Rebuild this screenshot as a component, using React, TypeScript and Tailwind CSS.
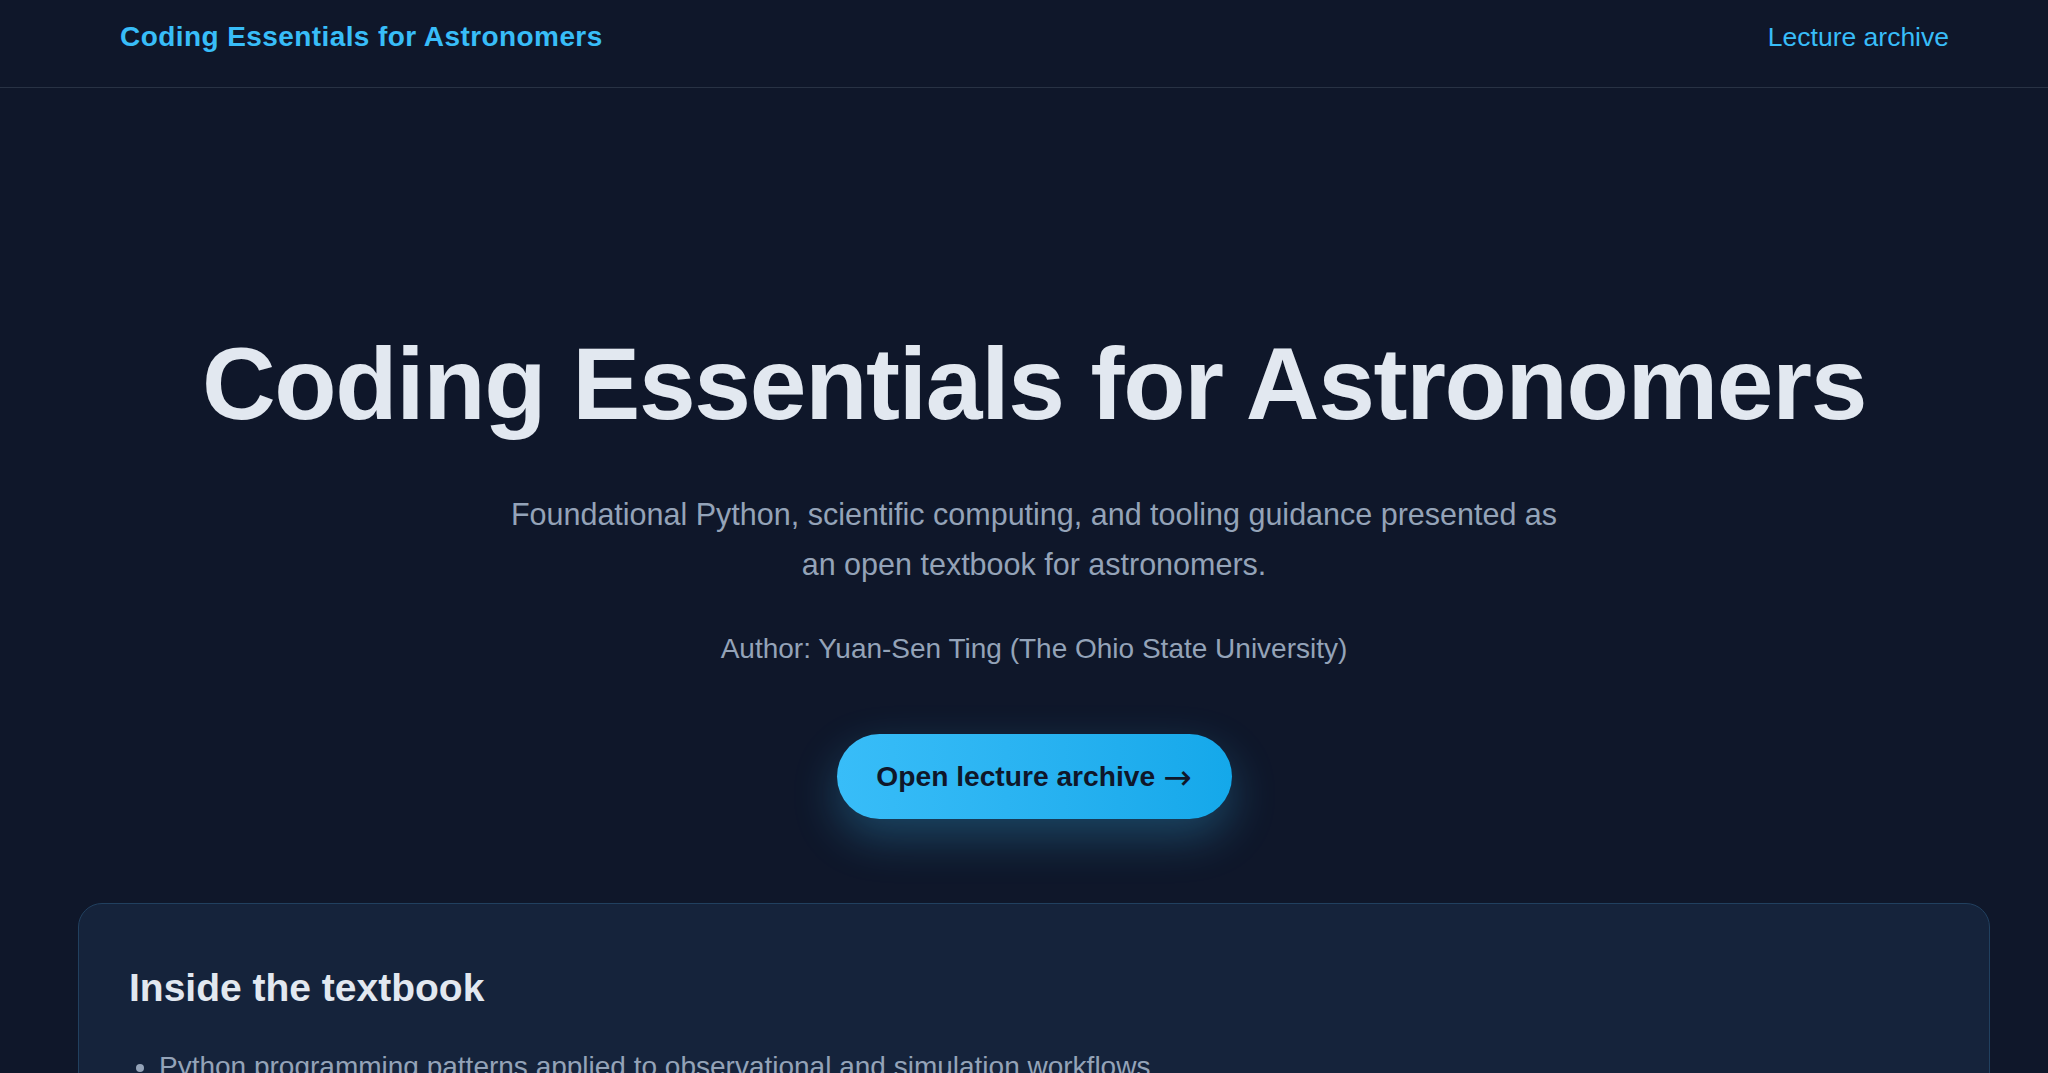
import React from "react";

export default function App() {
  return (
    <div className="min-h-screen bg-[#0f172a] font-['Liberation_Sans',Arial,sans-serif] text-[#e2e8f0]">
      <header className="h-[88px] border-b border-[#283244]">
        <div className="ml-[120px] mr-[99px] flex items-center justify-between pt-[16px]">
          <a className="text-[28px] font-bold leading-[42px] tracking-[0.015em] text-[#38bdf8]">
            Coding Essentials for Astronomers
          </a>
          <a className="text-[26.5px] leading-[42px] text-[#38bdf8]">Lecture archive</a>
        </div>
      </header>
      <main className="flex flex-col items-center pl-[20px]">
        <h1 className="mt-[240px] text-[102px] font-bold leading-[112px] tracking-[-0.013em] text-[#e2e8f0]">
          Coding Essentials for Astronomers
        </h1>
        <p className="mt-[49px] max-w-[1075px] text-center text-[30.5px] leading-[50px] text-[#94a3b8]">
          Foundational Python, scientific computing, and tooling guidance presented as an open textbook for astronomers.
        </p>
        <p className="mt-[35px] text-[28px] leading-[50px] text-[#94a3b8]">
          Author: Yuan-Sen Ting (The Ohio State University)
        </p>
        <a className="mt-[60px] flex h-[85px] w-[395px] items-center justify-center gap-[8px] rounded-full bg-gradient-to-r from-[#38bdf8] to-[#14a8ea] text-[28.2px] font-bold text-[#0f172a] shadow-[0_18px_45px_rgba(56,189,248,0.28)]">
          <span>Open lecture archive</span>
          <span className="font-['DejaVu_Sans',sans-serif] text-[34px] font-normal leading-none">→</span>
        </a>
        <section className="mt-[84px] w-[1912px] rounded-[24px] border border-[#21405f] bg-[#15233b] pl-[50px] pr-[50px] pt-[60px] pb-[50px]">
          <h2 className="text-[39px] font-bold leading-[47px] text-[#e2e8f0]">Inside the textbook</h2>
          <ul className="mt-[32px] list-disc pl-[30px] text-[28px] leading-[48px] text-[#94a3b8]">
            <li>Python programming patterns applied to observational and simulation workflows</li>
            <li>Scientific computing with NumPy, SciPy, and Matplotlib for astronomical data</li>
            <li>Version control, testing, and reproducible research tooling</li>
          </ul>
        </section>
      </main>
    </div>
  );
}
